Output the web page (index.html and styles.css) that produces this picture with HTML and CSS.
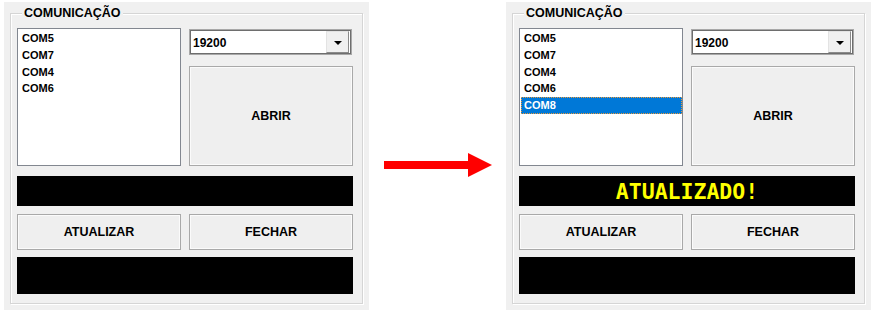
FILE: index.html
```html
<!DOCTYPE html>
<html lang="pt">
<head>
<meta charset="utf-8">
<title>Comunicação</title>
<link rel="stylesheet" href="styles.css">
</head>
<body>
<div class="stage">
  <section class="panel">
    <fieldset class="group">
      <legend class="legend">COMUNICAÇÃO</legend>
      <div class="content">
        <ul class="list">
          <li class="item">COM5</li>
          <li class="item">COM7</li>
          <li class="item">COM4</li>
          <li class="item">COM6</li>
        </ul>
        <div class="side">
          <div class="combo">
            <span class="combo-value">19200</span>
            <span class="combo-btn"><span class="caret"></span></span>
          </div>
          <button class="btn btn-big">ABRIR</button>
        </div>
        <div class="bar bar-status"></div>
        <button class="btn btn-row">ATUALIZAR</button>
        <button class="btn btn-row">FECHAR</button>
        <div class="bar bar-log"></div>
      </div>
    </fieldset>
  </section>

  <div class="middle">
    <svg class="arrow" width="108" height="24" viewBox="0 0 108 24" aria-hidden="true">
      <rect x="0" y="8" width="85" height="8" fill="#ff0000"/>
      <polygon points="84,0 108,12 84,24" fill="#ff0000"/>
    </svg>
  </div>

  <section class="panel">
    <fieldset class="group">
      <legend class="legend">COMUNICAÇÃO</legend>
      <div class="content">
        <ul class="list">
          <li class="item">COM5</li>
          <li class="item">COM7</li>
          <li class="item">COM4</li>
          <li class="item">COM6</li>
          <li class="item item-selected">COM8</li>
        </ul>
        <div class="side">
          <div class="combo">
            <span class="combo-value">19200</span>
            <span class="combo-btn"><span class="caret"></span></span>
          </div>
          <button class="btn btn-big">ABRIR</button>
        </div>
        <div class="bar bar-status"><span class="status-text">ATUALIZADO!</span></div>
        <button class="btn btn-row">ATUALIZAR</button>
        <button class="btn btn-row">FECHAR</button>
        <div class="bar bar-log"></div>
      </div>
    </fieldset>
  </section>
</div>
</body>
</html>
```
FILE: styles.css
```css
html, body {
  margin: 0;
  padding: 0;
  background: #ffffff;
}

body {
  font-family: "Liberation Sans", Arial, sans-serif;
  color: #000;
}

.stage {
  display: flex;
  align-items: flex-start;
  padding: 2px 0 0 4px;
}

.panel {
  background: #f0f0f0;
  padding: 4px 6px 6px 6px;
}

.group {
  margin: 0;
  padding: 8px 9px 9px 6px;
  border: 1px solid #d5d5d5;
  box-shadow: inset 1px 1px 0 #ffffff, 1px 1px 0 #ffffff;
  min-width: 0;
}

.legend {
  margin-left: 5px;
  padding: 0 2px;
  font-size: 12.5px;
  line-height: 14px;
  font-weight: bold;
  background: #f0f0f0;
}

.content {
  display: grid;
  grid-template-columns: 164px 164px;
  column-gap: 8px;
}

.list {
  list-style: none;
  margin: 0;
  padding: 1px 0 0 0;
  height: 138px;
  box-sizing: border-box;
  background: #ffffff;
  border: 1px solid #828790;
}

.item {
  font-size: 11px;
  font-weight: bold;
  line-height: 16.75px;
  height: 16.75px;
  padding-left: 3px;
  margin-left: 1px;
}

.item-selected {
  background: #0078d7;
  color: #ffffff;
  outline: 1px dotted #e89a3c;
  outline-offset: -1px;
}

.side {
  display: flex;
  flex-direction: column;
  gap: 11px;
  padding-top: 1px;
  height: 138px;
  box-sizing: border-box;
}

.combo {
  display: flex;
  align-items: center;
  justify-content: space-between;
  height: 26px;
  width: 163px;
  box-sizing: border-box;
  background: #ffffff;
  border: 1px solid #a8a8a8;
  box-shadow: inset 1px 1px 0 #6e6e6e, inset -1px -1px 0 #6e6e6e;
  padding: 1px 2px 0 3px;
}

.combo-value {
  font-size: 12px;
  font-weight: bold;
}

.combo-btn {
  display: flex;
  align-items: center;
  justify-content: center;
  width: 21px;
  height: 20px;
  background: #f0f0f0;
  border-left: 1px solid #e3e3e3;
  border-top: 1px solid #e3e3e3;
  border-right: 1px solid #8a8a8a;
  border-bottom: 1px solid #8a8a8a;
  margin-top: -1px;
}

.caret {
  width: 0;
  height: 0;
  border-left: 4px solid transparent;
  border-right: 4px solid transparent;
  border-top: 4px solid #000;
  margin-top: 1px;
}

.btn {
  font-family: "Liberation Sans", Arial, sans-serif;
  font-size: 12.5px;
  font-weight: bold;
  color: #000;
  background: #efefef;
  border: 1px solid #a9a9a9;
  box-shadow: inset 0 0 0 1px #fbfbfb;
  margin: 0;
  padding: 0;
}

.btn-big {
  flex: 1;
}

.btn-row {
  height: 36px;
  margin-top: 8px;
}

.bar {
  grid-column: 1 / -1;
  background: #000000;
  display: flex;
  align-items: center;
  justify-content: center;
}

.bar-status {
  height: 30px;
  margin-top: 10px;
}

.bar-log {
  height: 37px;
  margin-top: 7px;
}

.status-text {
  font-family: "DejaVu Sans Mono", "Liberation Mono", monospace;
  font-weight: bold;
  font-size: 21.5px;
  color: #ffff00;
  line-height: 1;
  padding-top: 1px;
}

.middle {
  width: 137px;
  padding-top: 151px;
}

.arrow {
  display: block;
  margin-left: 15px;
}
```
